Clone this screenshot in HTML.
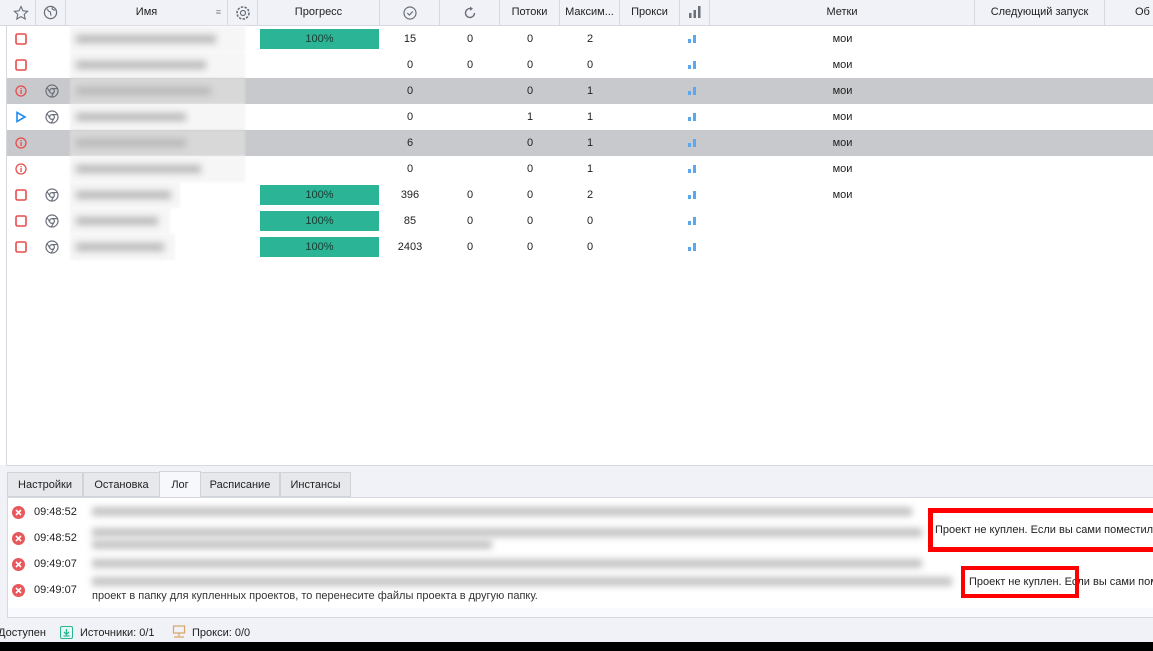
<!DOCTYPE html><html><head><meta charset="utf-8"><style>
*{margin:0;padding:0;box-sizing:border-box}
body{width:1153px;height:651px;overflow:hidden;background:#fff;font-family:"Liberation Sans",sans-serif;font-size:11px;color:#222;position:relative}
.a{position:absolute}
.hdr{left:0;top:0;width:1153px;height:26px;background:#f0f2f7;border-bottom:1px solid #d5d8de}
.hc{position:absolute;top:0;height:25px;line-height:25px;text-align:center;border-right:1px solid #d5d8de}
.row{position:absolute;left:7px;width:1146px;height:26px}
.g{background:#c8c9cc}
.c{position:absolute;top:0;height:26px;line-height:27px;text-align:center}
.prog{position:absolute;left:260px;top:3px;width:119px;height:20px;background:#2bb495;text-align:center;line-height:21px;color:#1a3a30}
.blur{position:absolute;left:63px;height:26px;width:175px;background:#f6f6f6;filter:blur(1px)}
.blur i{position:absolute;left:6px;top:9px;height:8px;background:#b8b8b8;filter:blur(3.5px)}
.bars{position:absolute;left:688px;top:9px;width:8px;height:8px}
.tab{position:absolute;top:472px;height:25px;line-height:25px;background:#e6e8ec;border:1px solid #d0d3d8;text-align:center;font-size:11px}
.lr{position:absolute;left:8px;width:1145px;height:26px}
.lt{position:absolute;left:26px;line-height:27px;top:0}
.lb{position:absolute;left:92px;height:9px;background:#c4c4c4;filter:blur(3.5px)}
</style></head><body>
<div class="a hdr"></div>
<div class="hc" style="left:6px;width:30px"><svg width="16" height="16" viewBox="0 0 16 16" style="margin-top:5px"><path d="M8 1.5l2 4.3 4.6.5-3.4 3.1 1 4.6L8 11.6 3.8 14l1-4.6L1.4 6.3 6 5.8z" fill="none" stroke="#6a6f7a" stroke-width="1.1"/></svg></div>
<div class="hc" style="left:36px;width:30px"><svg width="15" height="15" viewBox="0 0 16 16" style="margin-top:5px"><circle cx="8" cy="8" r="6.5" fill="none" stroke="#6a6f7a" stroke-width="1.3"/><path d="M4 4c2 1 1 3 3 3s0 3 2 4M10 2.5c-1 2 1 3 3 3" fill="none" stroke="#6a6f7a" stroke-width="1.2"/></svg></div>
<div class="hc" style="left:66px;width:162px">Имя<span style="position:absolute;right:6px;color:#888;font-size:9px">≡</span></div>
<div class="hc" style="left:228px;width:30px"><svg width="16" height="16" viewBox="0 0 16 16" style="margin-top:5px"><circle cx="8" cy="8" r="2.5" fill="none" stroke="#6a6f7a" stroke-width="1.2"/><circle cx="8" cy="8" r="6" fill="none" stroke="#6a6f7a" stroke-width="1.6" stroke-dasharray="2.4 1.3"/></svg></div>
<div class="hc" style="left:258px;width:122px">Прогресс</div>
<div class="hc" style="left:380px;width:60px"><svg width="14" height="14" viewBox="0 0 14 14" style="margin-top:6px"><circle cx="7" cy="7" r="6" fill="none" stroke="#6a6f7a" stroke-width="1.2"/><path d="M4.3 7l2 2 3.5-3.6" fill="none" stroke="#6a6f7a" stroke-width="1.2"/></svg></div>
<div class="hc" style="left:440px;width:60px"><svg width="14" height="14" viewBox="0 0 14 14" style="margin-top:6px"><path d="M11.5 7A4.5 4.5 0 1 1 8 2.6" fill="none" stroke="#6a6f7a" stroke-width="1.4"/><path d="M7 0.5l3 2.2-3 2.2z" fill="#6a6f7a"/></svg></div>
<div class="hc" style="left:500px;width:60px">Потоки</div>
<div class="hc" style="left:560px;width:60px">Максим...</div>
<div class="hc" style="left:620px;width:60px">Прокси</div>
<div class="hc" style="left:680px;width:30px"><svg width="12" height="12" viewBox="0 0 12 12" style="margin-top:6px"><rect x="0" y="7" width="2.5" height="5" fill="#6a6f7a"/><rect x="4.5" y="4" width="2.5" height="8" fill="#6a6f7a"/><rect x="9" y="0" width="2.5" height="12" fill="#6a6f7a"/></svg></div>
<div class="hc" style="left:710px;width:265px">Метки</div>
<div class="hc" style="left:975px;width:130px">Следующий запуск</div>
<div class="hc" style="left:1105px;width:60px;border:0;text-align:left;padding-left:30px">Об</div>
<div class="a" style="left:6px;top:26px;width:1px;height:440px;background:#d5d8de"></div>

<!-- rows -->
<div class="row" style="top:26px"><div class="c" style="left:8px"><svg width="12" height="12" style="margin-top:7px"><rect x="1" y="1" width="10" height="10" rx="1.5" fill="none" stroke="#e84b4b" stroke-width="1.6"/></svg></div><div class="blur"><i style="width:140px"></i></div><div class="prog" style="left:253px">100%</div><div class="c" style="left:373px;width:60px">15</div><div class="c" style="left:433px;width:60px">0</div><div class="c" style="left:493px;width:60px">0</div><div class="c" style="left:553px;width:60px">2</div><svg class="bars" style="left:681px"><rect x="0" y="4" width="3" height="4" fill="#5aa8ef"/><rect x="5" y="0" width="3" height="8" fill="#5aa8ef"/></svg><div class="c" style="left:703px;width:265px">мои</div></div>
<div class="row" style="top:52px"><div class="c" style="left:8px"><svg width="12" height="12" style="margin-top:7px"><rect x="1" y="1" width="10" height="10" rx="1.5" fill="none" stroke="#e84b4b" stroke-width="1.6"/></svg></div><div class="blur"><i style="width:130px"></i></div><div class="c" style="left:373px;width:60px">0</div><div class="c" style="left:433px;width:60px">0</div><div class="c" style="left:493px;width:60px">0</div><div class="c" style="left:553px;width:60px">0</div><svg class="bars" style="left:681px"><rect x="0" y="4" width="3" height="4" fill="#5aa8ef"/><rect x="5" y="0" width="3" height="8" fill="#5aa8ef"/></svg><div class="c" style="left:703px;width:265px">мои</div></div>
<div class="row g" style="top:78px"><div class="c" style="left:8px"><svg width="12" height="12" style="margin-top:7px"><circle cx="6" cy="6" r="5" fill="none" stroke="#e84b4b" stroke-width="1.3"/><rect x="5.4" y="5" width="1.3" height="4" fill="#e84b4b"/><rect x="5.4" y="3" width="1.3" height="1.2" fill="#e84b4b"/></svg></div><div class="c" style="left:38px"><svg width="14" height="14" style="margin-top:6px"><circle cx="7" cy="7" r="6" fill="none" stroke="#6a6f7a" stroke-width="1.2"/><circle cx="7" cy="7" r="2.4" fill="none" stroke="#6a6f7a" stroke-width="1.2"/><path d="M7 4.6h5.5M4.9 8.2L2 3.5M9.1 8.2l-3 5" stroke="#6a6f7a" stroke-width="1.1"/></svg></div><div class="blur" style="background:#d8d8d8"><i style="width:135px"></i></div><div class="c" style="left:373px;width:60px">0</div><div class="c" style="left:493px;width:60px">0</div><div class="c" style="left:553px;width:60px">1</div><svg class="bars" style="left:681px"><rect x="0" y="4" width="3" height="4" fill="#5aa8ef"/><rect x="5" y="0" width="3" height="8" fill="#5aa8ef"/></svg><div class="c" style="left:703px;width:265px">мои</div></div>
<div class="row" style="top:104px"><div class="c" style="left:8px"><svg width="12" height="12" style="margin-top:7px"><path d="M2 1.5l8 4.5-8 4.5z" fill="none" stroke="#1f8ef0" stroke-width="1.6"/></svg></div><div class="c" style="left:38px"><svg width="14" height="14" style="margin-top:6px"><circle cx="7" cy="7" r="6" fill="none" stroke="#6a6f7a" stroke-width="1.2"/><circle cx="7" cy="7" r="2.4" fill="none" stroke="#6a6f7a" stroke-width="1.2"/><path d="M7 4.6h5.5M4.9 8.2L2 3.5M9.1 8.2l-3 5" stroke="#6a6f7a" stroke-width="1.1"/></svg></div><div class="blur"><i style="width:110px"></i></div><div class="c" style="left:373px;width:60px">0</div><div class="c" style="left:493px;width:60px">1</div><div class="c" style="left:553px;width:60px">1</div><svg class="bars" style="left:681px"><rect x="0" y="4" width="3" height="4" fill="#5aa8ef"/><rect x="5" y="0" width="3" height="8" fill="#5aa8ef"/></svg><div class="c" style="left:703px;width:265px">мои</div></div>
<div class="row g" style="top:130px"><div class="c" style="left:8px"><svg width="12" height="12" style="margin-top:7px"><circle cx="6" cy="6" r="5" fill="none" stroke="#e84b4b" stroke-width="1.3"/><rect x="5.4" y="5" width="1.3" height="4" fill="#e84b4b"/><rect x="5.4" y="3" width="1.3" height="1.2" fill="#e84b4b"/></svg></div><div class="blur" style="background:#d8d8d8"><i style="width:110px"></i></div><div class="c" style="left:373px;width:60px">6</div><div class="c" style="left:493px;width:60px">0</div><div class="c" style="left:553px;width:60px">1</div><svg class="bars" style="left:681px"><rect x="0" y="4" width="3" height="4" fill="#5aa8ef"/><rect x="5" y="0" width="3" height="8" fill="#5aa8ef"/></svg><div class="c" style="left:703px;width:265px">мои</div></div>
<div class="row" style="top:156px"><div class="c" style="left:8px"><svg width="12" height="12" style="margin-top:7px"><circle cx="6" cy="6" r="5" fill="none" stroke="#e84b4b" stroke-width="1.3"/><rect x="5.4" y="5" width="1.3" height="4" fill="#e84b4b"/><rect x="5.4" y="3" width="1.3" height="1.2" fill="#e84b4b"/></svg></div><div class="blur"><i style="width:125px"></i></div><div class="c" style="left:373px;width:60px">0</div><div class="c" style="left:493px;width:60px">0</div><div class="c" style="left:553px;width:60px">1</div><svg class="bars" style="left:681px"><rect x="0" y="4" width="3" height="4" fill="#5aa8ef"/><rect x="5" y="0" width="3" height="8" fill="#5aa8ef"/></svg><div class="c" style="left:703px;width:265px">мои</div></div>
<div class="row" style="top:182px"><div class="c" style="left:8px"><svg width="12" height="12" style="margin-top:7px"><rect x="1" y="1" width="10" height="10" rx="1.5" fill="none" stroke="#e84b4b" stroke-width="1.6"/></svg></div><div class="c" style="left:38px"><svg width="14" height="14" style="margin-top:6px"><circle cx="7" cy="7" r="6" fill="none" stroke="#6a6f7a" stroke-width="1.2"/><circle cx="7" cy="7" r="2.4" fill="none" stroke="#6a6f7a" stroke-width="1.2"/><path d="M7 4.6h5.5M4.9 8.2L2 3.5M9.1 8.2l-3 5" stroke="#6a6f7a" stroke-width="1.1"/></svg></div><div class="blur" style="width:110px"><i style="width:95px"></i></div><div class="prog" style="left:253px">100%</div><div class="c" style="left:373px;width:60px">396</div><div class="c" style="left:433px;width:60px">0</div><div class="c" style="left:493px;width:60px">0</div><div class="c" style="left:553px;width:60px">2</div><svg class="bars" style="left:681px"><rect x="0" y="4" width="3" height="4" fill="#5aa8ef"/><rect x="5" y="0" width="3" height="8" fill="#5aa8ef"/></svg><div class="c" style="left:703px;width:265px">мои</div></div>
<div class="row" style="top:208px"><div class="c" style="left:8px"><svg width="12" height="12" style="margin-top:7px"><rect x="1" y="1" width="10" height="10" rx="1.5" fill="none" stroke="#e84b4b" stroke-width="1.6"/></svg></div><div class="c" style="left:38px"><svg width="14" height="14" style="margin-top:6px"><circle cx="7" cy="7" r="6" fill="none" stroke="#6a6f7a" stroke-width="1.2"/><circle cx="7" cy="7" r="2.4" fill="none" stroke="#6a6f7a" stroke-width="1.2"/><path d="M7 4.6h5.5M4.9 8.2L2 3.5M9.1 8.2l-3 5" stroke="#6a6f7a" stroke-width="1.1"/></svg></div><div class="blur" style="width:100px"><i style="width:82px"></i></div><div class="prog" style="left:253px">100%</div><div class="c" style="left:373px;width:60px">85</div><div class="c" style="left:433px;width:60px">0</div><div class="c" style="left:493px;width:60px">0</div><div class="c" style="left:553px;width:60px">0</div><svg class="bars" style="left:681px"><rect x="0" y="4" width="3" height="4" fill="#5aa8ef"/><rect x="5" y="0" width="3" height="8" fill="#5aa8ef"/></svg></div>
<div class="row" style="top:234px"><div class="c" style="left:8px"><svg width="12" height="12" style="margin-top:7px"><rect x="1" y="1" width="10" height="10" rx="1.5" fill="none" stroke="#e84b4b" stroke-width="1.6"/></svg></div><div class="c" style="left:38px"><svg width="14" height="14" style="margin-top:6px"><circle cx="7" cy="7" r="6" fill="none" stroke="#6a6f7a" stroke-width="1.2"/><circle cx="7" cy="7" r="2.4" fill="none" stroke="#6a6f7a" stroke-width="1.2"/><path d="M7 4.6h5.5M4.9 8.2L2 3.5M9.1 8.2l-3 5" stroke="#6a6f7a" stroke-width="1.1"/></svg></div><div class="blur" style="width:105px"><i style="width:88px"></i></div><div class="prog" style="left:253px">100%</div><div class="c" style="left:373px;width:60px">2403</div><div class="c" style="left:433px;width:60px">0</div><div class="c" style="left:493px;width:60px">0</div><div class="c" style="left:553px;width:60px">0</div><svg class="bars" style="left:681px"><rect x="0" y="4" width="3" height="4" fill="#5aa8ef"/><rect x="5" y="0" width="3" height="8" fill="#5aa8ef"/></svg></div>

<!-- bottom panel -->
<div class="a" style="left:0;top:465px;width:1153px;height:155px;background:#f0f2f7"></div>
<div class="a" style="left:6px;top:465px;width:1147px;height:1px;background:#d5d8de"></div>
<div class="tab" style="left:7px;width:76px">Настройки</div>
<div class="tab" style="left:83px;width:77px">Остановка</div>
<div class="tab" style="left:159px;width:42px;top:471px;height:27px;line-height:27px;background:#f7f8fb;border-bottom:0">Лог</div>
<div class="tab" style="left:200px;width:80px">Расписание</div>
<div class="tab" style="left:280px;width:71px">Инстансы</div>
<div class="a" style="left:7px;top:497px;width:1146px;height:121px;background:#f9fafd;border:1px solid #d5d8de;border-right:0"></div>
<div class="a" style="left:8px;top:498px;width:1145px;height:110px;background:#fff"></div>
<div class="lr" style="top:499px"><svg class="a" style="left:4px;top:7px" width="13" height="13"><circle cx="6.5" cy="6.5" r="6.5" fill="#e8575a"/><path d="M4 4l5 5M9 4l-5 5" stroke="#fff" stroke-width="1.6"/></svg><span class="lt">09:48:52</span><div class="lb" style="top:8px;width:820px;left:84px"></div></div>
<div class="lr" style="top:525px"><svg class="a" style="left:4px;top:7px" width="13" height="13"><circle cx="6.5" cy="6.5" r="6.5" fill="#e8575a"/><path d="M4 4l5 5M9 4l-5 5" stroke="#fff" stroke-width="1.6"/></svg><span class="lt">09:48:52</span><div class="lb" style="top:3px;width:830px;left:84px"></div><div class="lb" style="top:15px;width:400px;left:84px"></div></div>
<div class="lr" style="top:551px"><svg class="a" style="left:4px;top:7px" width="13" height="13"><circle cx="6.5" cy="6.5" r="6.5" fill="#e8575a"/><path d="M4 4l5 5M9 4l-5 5" stroke="#fff" stroke-width="1.6"/></svg><span class="lt">09:49:07</span><div class="lb" style="top:8px;width:830px;left:84px"></div></div>
<div class="lr" style="top:577px"><svg class="a" style="left:4px;top:7px" width="13" height="13"><circle cx="6.5" cy="6.5" r="6.5" fill="#e8575a"/><path d="M4 4l5 5M9 4l-5 5" stroke="#fff" stroke-width="1.6"/></svg><span class="lt">09:49:07</span><div class="lb" style="top:0px;width:860px;left:84px"></div></div>
<div class="a" style="left:92px;top:590px;font-size:11px;color:#333">проект в папку для купленных проектов, то перенесите файлы проекта в другую папку.</div>
<div class="a" style="left:935px;top:520px;font-size:11px;line-height:20px;white-space:nowrap">Проект не куплен. Если вы сами поместил</div>
<div class="a" style="left:928px;top:508px;width:225px;height:44px;border:5px solid #f00;border-right:0"></div>
<div class="a" style="left:969px;top:572px;font-size:11px;line-height:20px;white-space:nowrap">Проект не куплен. Если вы сами пом</div>
<div class="a" style="left:961px;top:566px;width:118px;height:32px;border:4px solid #f00"></div>

<!-- status -->
<div class="a" style="left:0;top:620px;width:1153px;height:22px;background:#f0f2f7;line-height:26px">
<span class="a" style="left:-2px">Доступен</span>
<svg class="a" style="left:60px;top:6px" width="13" height="13"><rect x="0.5" y="0.5" width="12" height="12" rx="1.5" fill="#e8f6f1" stroke="#2bb495"/><path d="M6.5 3v5M4 6l2.5 2.5L9 6M3.5 10h6" stroke="#2bb495" stroke-width="1.3" fill="none"/></svg>
<span class="a" style="left:80px">Источники: 0/1</span>
<svg class="a" style="left:172px;top:5px" width="14" height="14"><rect x="1.5" y="1" width="11" height="7" fill="none" stroke="#d9a466" stroke-width="1.2"/><path d="M7 8v3M2 12h10" stroke="#d9a466" stroke-width="1.2"/></svg>
<span class="a" style="left:192px">Прокси: 0/0</span></div>
<div class="a" style="left:0;top:642px;width:1153px;height:9px;background:#000"></div>
</body></html>
